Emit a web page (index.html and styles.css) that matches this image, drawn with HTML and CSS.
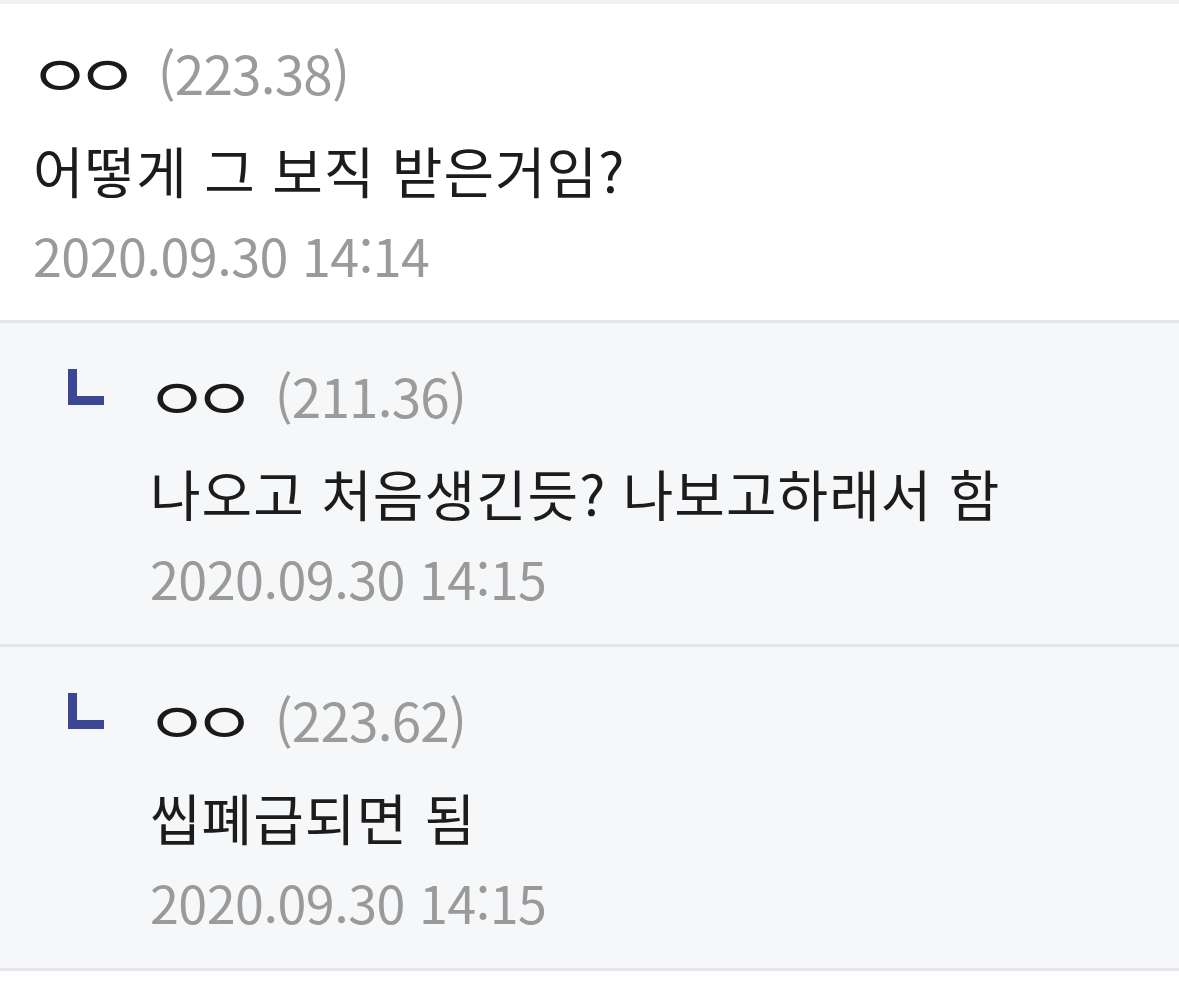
FILE: index.html
```html
<!DOCTYPE html>
<html lang="ko">
<head>
<meta charset="utf-8">
<link rel="stylesheet" href="styles.css">
</head>
<body>
<div class="topband"></div>
<div class="comment">
  <div class="body">
    <div class="meta"><span class="nick">ㅇㅇ</span><span class="ip">(223.38)</span></div>
    <div class="text">어떻게 그 보직 받은거임?</div>
    <div class="date">2020.09.30 14:14</div>
  </div>
</div>
<div class="comment reply">
  <div class="mark"><svg width="36" height="36" viewBox="0 0 36 36"><path d="M0 0H9V27H36V36H0Z" fill="#3b4694"/></svg></div>
  <div class="body">
    <div class="meta"><span class="nick">ㅇㅇ</span><span class="ip">(211.36)</span></div>
    <div class="text">나오고 처음생긴듯? 나보고하래서 함</div>
    <div class="date">2020.09.30 14:15</div>
  </div>
</div>
<div class="comment reply">
  <div class="mark"><svg width="36" height="36" viewBox="0 0 36 36"><path d="M0 0H9V27H36V36H0Z" fill="#3b4694"/></svg></div>
  <div class="body">
    <div class="meta"><span class="nick">ㅇㅇ</span><span class="ip">(223.62)</span></div>
    <div class="text">씹폐급되면 됨</div>
    <div class="date">2020.09.30 14:15</div>
  </div>
</div>
<div class="bottom"></div>
</body>
</html>
```
FILE: styles.css
```css
html, body {
  margin: 0;
  padding: 0;
  background: #ffffff;
}
body {
  font-family: "Noto Sans CJK KR", "Noto Sans", sans-serif;
  width: 1179px;
  height: 993px;
  overflow: hidden;
}
.topband {
  height: 4px;
  background: #eef2f4;
}
.comment {
  display: flex;
  padding: 38px 0 37px 33px;
  background: #ffffff;
}
.reply {
  background: #f5f7f9;
  border-top: 3px solid #e4e6e9;
  padding: 42px 0 38px 68px;
}
.mark {
  width: 82px;
  flex: none;
  padding-top: 4px;
}
.mark svg {
  display: block;
}
.body {
  display: flex;
  flex-direction: column;
}
.meta {
  height: 60px;
  line-height: 60px;
  display: flex;
  align-items: center;
  gap: 51px;
}
.nick {
  display: inline-block;
  margin-left: -5px;
  font-size: 58px;
  color: #1a1a1a;
  letter-spacing: -14px;
  transform: scaleX(1.2);
  transform-origin: left center;
}
.ip {
  font-size: 53px;
  color: #9b9b9b;
  letter-spacing: -0.8px;
}
.text {
  margin-top: 32px;
  height: 70px;
  line-height: 70px;
  font-size: 55px;
  color: #1c1c1c;
  letter-spacing: 1px;
}
.date {
  margin-top: 23px;
  height: 56px;
  line-height: 56px;
  font-size: 52px;
  color: #9a9a9a;
  letter-spacing: -0.5px;
}
.bottom {
  border-top: 3px solid #e4e6e9;
  height: 20px;
  background: #ffffff;
}
```
